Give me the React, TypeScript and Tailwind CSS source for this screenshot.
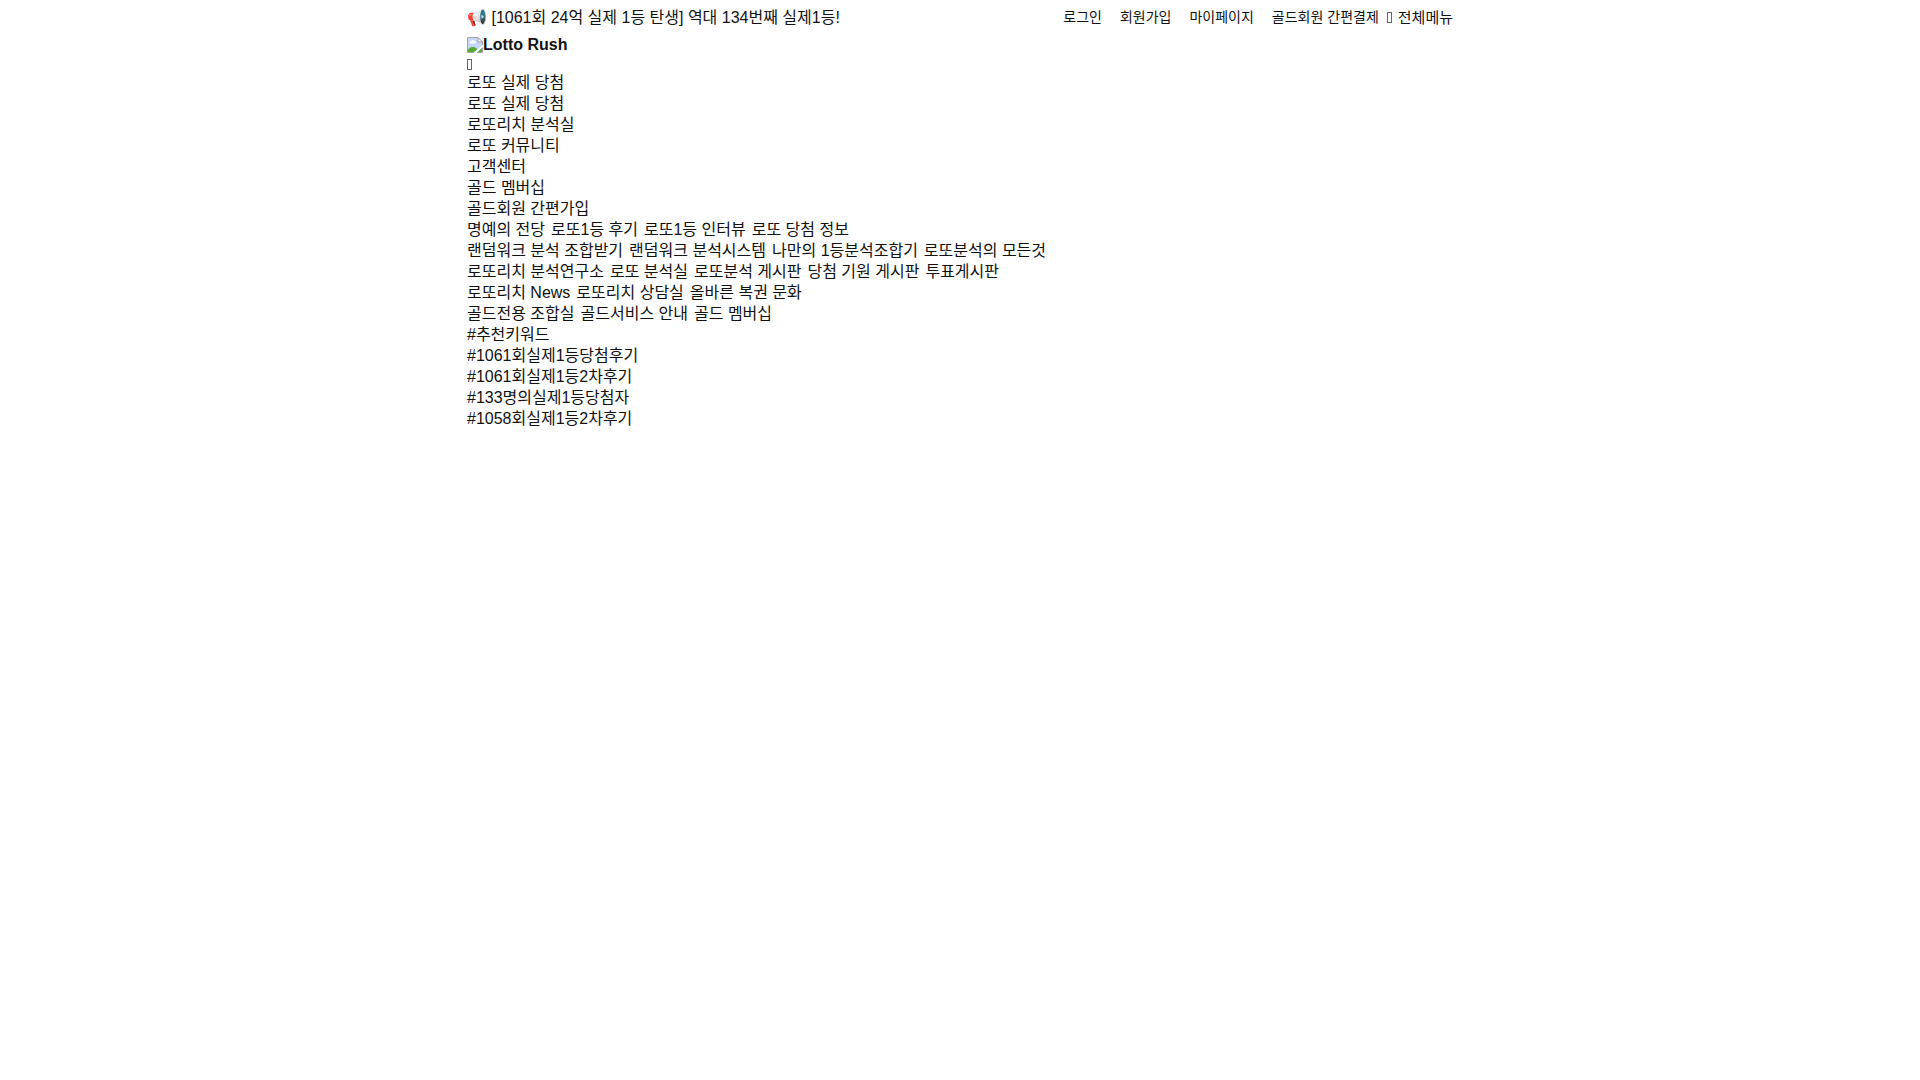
import React from 'react';

const USER_LINKS = ['로그인', '회원가입', '마이페이지', '골드회원 간편결제'];

const MAIN_MENU = [
  '로또 실제 당첨',
  '로또 실제 당첨',
  '로또리치 분석실',
  '로또 커뮤니티',
  '고객센터',
  '골드 멤버십',
  '골드회원 간편가입',
];

const SUB_MENUS = [
  ['명예의 전당', '로또1등 후기', '로또1등 인터뷰', '로또 당첨 정보'],
  ['랜덤워크 분석 조합받기', '랜덤워크 분석시스템', '나만의 1등분석조합기', '로또분석의 모든것'],
  ['로또리치 분석연구소', '로또 분석실', '로또분석 게시판', '당첨 기원 게시판', '투표게시판'],
  ['로또리치 News', '로또리치 상담실', '올바른 복권 문화'],
  ['골드전용 조합실', '골드서비스 안내', '골드 멤버십'],
];

const KEYWORDS = ['#1061회실제1등당첨후기', '#1061회실제1등2차후기', '#133명의실제1등당첨자', '#1058회실제1등2차후기'];

function MenuIcon() {
  return (
    <svg viewBox="0 0 5 11" fill="none" stroke="#666" strokeWidth="1" className="w-[5px] h-[11px] shrink-0" aria-hidden="true">
      <rect x="0.5" y="0.5" width="4" height="10" />
    </svg>
  );
}

function LogoIcon() {
  return (
    <svg viewBox="0 0 16 16" className="w-4 h-4 shrink-0" aria-hidden="true">
      <path d="M.5 .5H11L15.500 5V8L7 15.500H.5Z" fill="#c4d7f5" />
      <path d="M3 6.500a1.500 1.500 0 0 1 1-2.500 2 2 0 0 1 3.500 0 1.300 1.300 0 0 1 .5 2.500Z" fill="#fff" />
      <path d="M1 15v-2.500C3 10 5.500 9.500 8 10.500l2.500 1.500L7 15Z" fill="#55aa35" />
      <path d="M7 15.500H.5V.5H11L15.500 5V8" fill="none" stroke="#a3a3a3" />
      <path d="M11 .5V5h4.500Z" fill="#fff" stroke="#a3a3a3" />
      <path d="M7 16 16 8v2L9.500 16Z" fill="#fff" />
      <path d="M15.500 10.500v5H10Z" fill="#55aa35" />
      <path d="M15.500 10.500v5H10" fill="none" stroke="#a3a3a3" />
    </svg>
  );
}

export default function App() {
  return (
    <div className="max-w-[986px] mx-auto text-base leading-[21px] text-[#111] font-['Liberation_Sans','Noto_Sans_CJK_KR',sans-serif]">
      <header>
        <div className="flex items-center justify-between h-[34px]">
          <a href="#notice">📢 [1061회 24억 실제 1등 탄생] 역대 134번째 실제1등!</a>
          <div className="flex items-center gap-2">
            <nav className="flex gap-[18px] text-sm">
              {USER_LINKS.map(label => (
                <a key={label} href="#user">{label}</a>
              ))}
            </nav>
            <button type="button" className="flex items-center gap-1.5 text-[15px]">
              <MenuIcon />
              전체메뉴
            </button>
          </div>
        </div>
        <h1 className="font-bold leading-[22px]">
          <a href="#home" className="flex items-center">
            <LogoIcon />
            Lotto Rush
          </a>
        </h1>
        <button type="button" aria-label="검색" className="flex items-center h-4">
          <MenuIcon />
        </button>
      </header>

      <nav>
        <ul>
          {MAIN_MENU.map((label, i) => (
            <li key={i}><a href="#menu">{label}</a></li>
          ))}
        </ul>
        {SUB_MENUS.map((items, i) => (
          <div key={i} className="flex flex-wrap gap-x-1.5">
            {items.map(label => (
              <a key={label} href="#submenu">{label}</a>
            ))}
          </div>
        ))}
      </nav>

      <section>
        <h2>#추천키워드</h2>
        <ul>
          {KEYWORDS.map(word => (
            <li key={word}><a href="#keyword">{word}</a></li>
          ))}
        </ul>
      </section>
    </div>
  );
}
